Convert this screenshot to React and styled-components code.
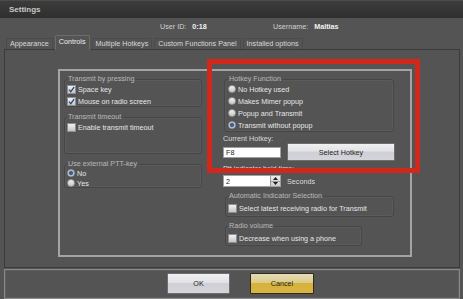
import React from 'react';
import styled, { createGlobalStyle } from 'styled-components';

const GlobalStyle = createGlobalStyle`
  html, body {
    margin: 0;
    padding: 0;
    background: #545454;
  }
  body {
    font-family: "Liberation Sans", Arial, sans-serif;
    font-size: 7.2px;
    color: #e4e4e4;
  }
`;

const Window = styled.div`
  position: relative;
  width: 463px;
  height: 299px;
  display: flex;
  flex-direction: column;
  background: #545454;
  overflow: hidden;
`;

const TitleBar = styled.div`
  height: 18px;
  flex: none;
  display: flex;
  align-items: center;
  padding-left: 9px;
  background: linear-gradient(#3c3c3c, #2f2f2f);
  border-top: 1px solid #4a4a4a;
  box-sizing: border-box;
  color: #c9c9c9;
  font-weight: bold;
  font-size: 8px;
`;

const InfoRow = styled.div`
  height: 17px;
  flex: none;
  display: flex;
  align-items: center;
  padding-left: 160px;
`;

const InfoItem = styled.div`
  width: ${p => p.$w || 'auto'};
  display: flex;
  gap: 6px;
  color: #d2d2d2;
`;

const InfoValue = styled.span`
  color: #f2f2f2;
  font-weight: bold;
`;

const TabStrip = styled.div`
  height: 14px;
  flex: none;
  display: flex;
  align-items: flex-end;
  padding-left: 6px;
  position: relative;
  z-index: 1;
`;

const Tab = styled.div`
  box-sizing: border-box;
  height: ${p => (p.$active ? 15 : 11)}px;
  margin-right: 2px;
  margin-bottom: ${p => (p.$active ? -1 : 0)}px;
  padding: ${p => (p.$active ? '0 3px 3px' : '0 3px 1px')};
  display: flex;
  align-items: center;
  border: 1px solid ${p => (p.$active ? '#6c6c6c' : '#4b4b4b')};
  border-bottom: none;
  border-radius: 2px 2px 0 0;
  background: #545454;
  color: ${p => (p.$active ? '#eeeeee' : '#d8d8d8')};
  white-space: nowrap;
`;

const TabPanel = styled.div`
  box-sizing: border-box;
  height: 219px;
  flex: none;
  margin: 0 3px 0 4px;
  border: 1px solid #3b3b3b;
`;

const Frame = styled.div`
  box-sizing: border-box;
  width: 354px;
  height: 188px;
  margin: 19px 0 0 53px;
  padding: 4px 0 0 4px;
  border: 2px solid #a4a4a4;
  display: flex;
`;

const Column = styled.div`
  display: flex;
  flex-direction: column;
  width: ${p => p.$w}px;
  margin-left: ${p => p.$ml || 0}px;
  gap: ${p => p.$gap || 0}px;
`;

const Group = styled.fieldset`
  box-sizing: border-box;
  margin: ${p => p.$mt || 0}px 0 0 ${p => p.$ml || 0}px;
  padding: ${p => p.$pt || 0}px 0 0 ${p => p.$pl || 2}px;
  width: ${p => p.$w}px;
  height: ${p => p.$h}px;
  min-inline-size: 0;
  border: 1px solid #464646;
  border-radius: 3px;
  box-shadow: 0 0 0 1px rgba(110, 110, 110, 0.25) inset;
`;

const Legend = styled.legend`
  padding: 0 1px;
  margin-left: 0;
  font-size: 7.2px;
  line-height: 8px;
  color: #b8b8b8;
`;

const OptionRow = styled.div`
  display: flex;
  align-items: center;
  gap: 2px;
  height: ${p => p.$h || 12}px;
  color: #e6e6e6;
  white-space: nowrap;
`;

const Box = styled.span`
  box-sizing: border-box;
  width: 9px;
  height: 9px;
  flex: none;
  display: flex;
  align-items: center;
  justify-content: center;
  border: 1px solid #8e8e8e;
  background: linear-gradient(#f0f0f0, #c6c6c6);
`;

const Dot = styled.span`
  box-sizing: border-box;
  width: 8px;
  height: 8px;
  flex: none;
  border-radius: 50%;
  border: 1px solid #9a9a9a;
  background: ${p =>
    p.$on
      ? 'radial-gradient(circle, #3e5f92 0 1.6px, #8fa3c2 2.2px, #e4e4e4 3px)'
      : 'linear-gradient(#f2f2f2, #c8c8c8)'};
`;

const FieldLabel = styled.div`
  height: ${p => p.$h}px;
  margin-top: ${p => p.$mt || 0}px;
  display: flex;
  align-items: center;
  color: #dadada;
  white-space: nowrap;
  overflow: hidden;
`;

const FieldRow = styled.div`
  display: flex;
  align-items: center;
  gap: ${p => p.$gap || 6}px;
  height: ${p => p.$h}px;
  margin-top: ${p => p.$mt || 0}px;
`;

const TextBox = styled.div`
  box-sizing: border-box;
  width: ${p => p.$w}px;
  height: ${p => p.$h}px;
  display: flex;
  align-items: center;
  padding-left: 2px;
  background: #ffffff;
  border: 1px solid #a0a0a0;
  color: #1c1c1c;
`;

const Spinner = styled(TextBox)`
  justify-content: space-between;
`;

const SpinButtons = styled.div`
  width: 9px;
  height: 100%;
  display: flex;
  flex-direction: column;
  border-left: 1px solid #9a9a9a;
  background: linear-gradient(#ececec, #cfcfcf);
`;

const SpinHalf = styled.div`
  flex: 1;
  display: flex;
  align-items: center;
  justify-content: center;
  border-top: ${p => (p.$bottom ? '1px solid #9a9a9a' : 'none')};
`;

const Button = styled.div`
  box-sizing: border-box;
  width: ${p => p.$w}px;
  height: ${p => p.$h}px;
  display: flex;
  align-items: center;
  justify-content: center;
  border: 1px solid ${p => (p.$gold ? '#2e2a1e' : '#6e6e6e')};
  border-radius: 1px;
  background: ${p =>
    p.$gold
      ? 'linear-gradient(#e6dcb6 0%, #dccb8a 45%, #d6b23a 50%, #d8b544 100%)'
      : 'linear-gradient(#f0f0f3 0%, #e2e2e6 45%, #cfd0d5 50%, #d4d5da 100%)'};
  color: #1e1e1e;
  font-size: 7.2px;
`;

const ButtonBar = styled.div`
  box-sizing: border-box;
  height: 30px;
  flex: none;
  margin: 1px 3px 0 4px;
  padding: 3px 0 0 162px;
  display: flex;
  gap: 20px;
  border: 1px solid #8a8a8a;
  box-shadow: 0 0 0 1px #5e5e5e inset;
`;

const Highlight = styled.div`
  position: absolute;
  left: 207px;
  top: 59px;
  width: 213px;
  height: 114px;
  box-sizing: border-box;
  border: 5px solid #d2281c;
  pointer-events: none;
`;

const Check = () => (
  <svg width="7" height="7" viewBox="0 0 7 7">
    <path d="M1 3.6 L2.8 5.6 L6.2 1" fill="none" stroke="#2c4c80" strokeWidth="1.3" />
  </svg>
);

const Arrow = ({ down }) => (
  <svg width="5" height="3" viewBox="0 0 5 3">
    <path d={down ? 'M0 0 H5 L2.5 3 Z' : 'M0 3 H5 L2.5 0 Z'} fill="#1e1e1e" />
  </svg>
);

const CheckOption = ({ checked, h, children }) => (
  <OptionRow $h={h}>
    <Box>{checked && <Check />}</Box>
    {children}
  </OptionRow>
);

const RadioOption = ({ on, h, children }) => (
  <OptionRow $h={h}>
    <Dot $on={on} />
    {children}
  </OptionRow>
);

const tabs = ['Appearance', 'Controls', 'Multiple Hotkeys', 'Custom Functions Panel', 'Installed options'];
const hotkeyModes = ['No Hotkey used', 'Makes Mimer popup', 'Popup and Transmit', 'Transmit without popup'];

export default function App() {
  return (
    <Window>
      <GlobalStyle />
      <TitleBar>Settings</TitleBar>

      <InfoRow>
        <InfoItem $w="113px">
          User ID: <InfoValue>0:18</InfoValue>
        </InfoItem>
        <InfoItem>
          Username: <InfoValue>Maltias</InfoValue>
        </InfoItem>
      </InfoRow>

      <TabStrip>
        {tabs.map(t => (
          <Tab key={t} $active={t === 'Controls'}>
            {t}
          </Tab>
        ))}
      </TabStrip>

      <TabPanel>
        <Frame>
          <Column $w={138} $gap={6}>
            <Group $w={138} $h={32}>
              <Legend>Transmit by pressing</Legend>
              <CheckOption checked>Space key</CheckOption>
              <CheckOption checked>Mouse on radio screen</CheckOption>
            </Group>
            <Group $w={138} $h={41}>
              <Legend>Transmit timeout</Legend>
              <CheckOption>Enable transmit timeout</CheckOption>
            </Group>
            <Group $w={138} $h={28}>
              <Legend>Use external PTT-key</Legend>
              <RadioOption on h={10}>No</RadioOption>
              <RadioOption h={10}>Yes</RadioOption>
            </Group>
          </Column>

          <Column $w={175} $ml={21}>
            <Group $w={170} $h={57} $ml={1} $pl={3}>
              <Legend>Hotkey Function</Legend>
              {hotkeyModes.map((m, i) => (
                <RadioOption key={m} on={i === 3}>
                  {m}
                </RadioOption>
              ))}
            </Group>

            <FieldLabel $h={9} $mt={2}>Current Hotkey:</FieldLabel>
            <FieldRow $h={18}>
              <TextBox $w={58} $h={11}>F8</TextBox>
              <Button $w={108} $h={18}>Select Hotkey</Button>
            </FieldRow>

            <FieldLabel $h={10} $mt={2}>Ptt indicator hold time:</FieldLabel>
            <FieldRow $h={12} $mt={2}>
              <Spinner $w={58} $h={12}>
                2
                <SpinButtons>
                  <SpinHalf><Arrow /></SpinHalf>
                  <SpinHalf $bottom><Arrow down /></SpinHalf>
                </SpinButtons>
              </Spinner>
              <FieldLabel $h={12}>Seconds</FieldLabel>
            </FieldRow>

            <Group $w={169} $h={25} $ml={2} $mt={5} $pt={2}>
              <Legend>Automatic Indicator Selection</Legend>
              <CheckOption>Select latest receiving radio for Transmit</CheckOption>
            </Group>
            <Group $w={137} $h={24} $ml={2} $mt={5} $pt={2}>
              <Legend>Radio volume</Legend>
              <CheckOption>Decrease when using a phone</CheckOption>
            </Group>
          </Column>
        </Frame>
      </TabPanel>

      <ButtonBar>
        <Button $w={63} $h={21}>OK</Button>
        <Button $w={64} $h={21} $gold>Cancel</Button>
      </ButtonBar>

      <Highlight />
    </Window>
  );
}
